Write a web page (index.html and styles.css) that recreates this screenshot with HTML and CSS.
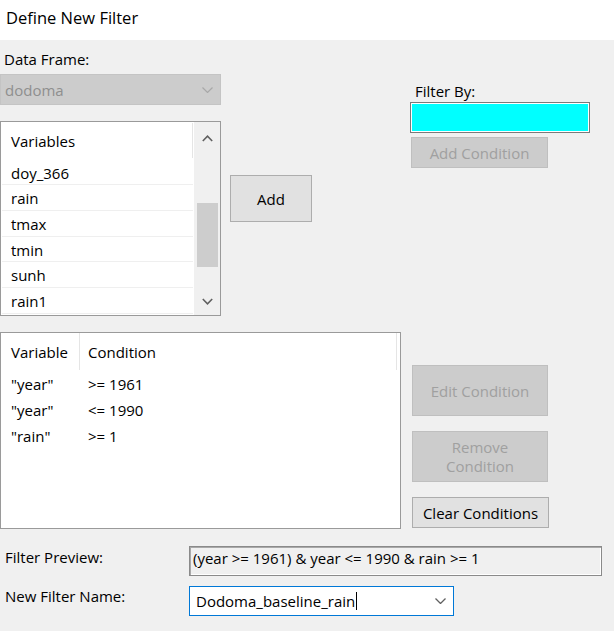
FILE: index.html
```html
<!DOCTYPE html>
<html>
<head>
<meta charset="utf-8">
<title>Define New Filter</title>
<link rel="stylesheet" href="styles.css">
</head>
<body>
<div class="window">
  <div class="titlebar">Define New Filter</div>
  <div class="content">
    <div class="top">
      <div class="left-col">
        <div class="label df-label">Data Frame:</div>
        <div class="combo">
          <span class="combo-text">dodoma</span>
          <svg class="chev" width="11" height="6" viewBox="0 0 11 6"><polyline points="0.5,0.5 5.5,5.5 10.5,0.5" fill="none" stroke="#a8a8a8" stroke-width="1.2"/></svg>
        </div>
        <div class="listbox">
          <div class="lb-items">
            <div class="lb-header"><span class="lb-col">Variables</span></div>
            <div class="lb-row">doy_366</div>
            <div class="lb-row">rain</div>
            <div class="lb-row">tmax</div>
            <div class="lb-row">tmin</div>
            <div class="lb-row">sunh</div>
            <div class="lb-row">rain1</div>
          </div>
          <div class="vscroll">
            <div class="sb-btn sb-up"><svg width="11" height="7" viewBox="0 0 11 7"><polyline points="0.8,6 5.5,1.2 10.2,6" fill="none" stroke="#606060" stroke-width="1.6"/></svg></div>
            <div class="sb-track"><div class="sb-thumb"></div></div>
            <div class="sb-btn sb-down"><svg width="11" height="7" viewBox="0 0 11 7"><polyline points="0.8,1 5.5,5.8 10.2,1" fill="none" stroke="#606060" stroke-width="1.6"/></svg></div>
          </div>
        </div>
      </div>
      <button class="btn add-btn">Add</button>
      <div class="right-col">
        <div class="label fb-label">Filter By:</div>
        <div class="cyan-input"></div>
        <button class="btn disabled addcond-btn">Add Condition</button>
      </div>
    </div>

    <div class="middle">
      <div class="conditions">
        <div class="cond-header">
          <div class="c1">Variable</div>
          <div class="c2">Condition</div>
        </div>
        <div class="cond-row"><div class="c1">"year"</div><div class="c2">&gt;= 1961</div></div>
        <div class="cond-row"><div class="c1">"year"</div><div class="c2">&lt;= 1990</div></div>
        <div class="cond-row"><div class="c1">"rain"</div><div class="c2">&gt;= 1</div></div>
      </div>
      <div class="cond-buttons">
        <button class="btn disabled tall">Edit Condition</button>
        <button class="btn disabled tall two-line">Remove<br>Condition</button>
        <button class="btn clear-btn">Clear Conditions</button>
      </div>
    </div>

    <div class="form-row preview-row">
      <div class="flabel">Filter Preview:</div>
      <div class="preview">(year &gt;= 1961) &amp; year &lt;= 1990 &amp; rain &gt;= 1</div>
    </div>
    <div class="form-row name-row">
      <div class="flabel">New Filter Name:</div>
      <div class="name-input">
        <span class="name-text">Dodoma_baseline_rain</span><span class="caret"></span>
        <svg class="name-chev" width="11" height="6" viewBox="0 0 11 6"><polyline points="0.5,0.5 5.5,5.5 10.5,0.5" fill="none" stroke="#606060" stroke-width="1.3"/></svg>
      </div>
    </div>
  </div>
</div>
</body>
</html>
```

FILE: styles.css
```css
html, body {
  margin: 0;
  padding: 0;
}
body {
  font-family: "Open Sans", "Noto Sans", sans-serif;
  font-size: 15px;
  color: #000;
  background: #f0f0f0;
}
.window {
  width: 614px;
  height: 631px;
  overflow: hidden;
}
.titlebar {
  height: 40px;
  box-sizing: border-box;
  background: #fff;
  padding: 7px 0 0 6px;
  font-size: 16.5px;
  line-height: 22px;
}
.content {
  background: #f0f0f0;
  height: 591px;
}

/* ---------- top section ---------- */
.top {
  display: flex;
  height: 276px;
}
.left-col {
  width: 221px;
  display: flex;
  flex-direction: column;
}
.label {
  line-height: 18px;
}
.df-label {
  margin: 10px 0 0 4px;
}
.combo {
  margin-top: 6px;
  height: 31px;
  box-sizing: border-box;
  background: #cccccc;
  border: 1px solid #c4c4c4;
  display: flex;
  align-items: center;
  justify-content: space-between;
  padding: 0 7px 0 4px;
  color: #8f8f8f;
  line-height: 18px;
}
.chev {
  display: block;
}
.listbox {
  margin-top: 16px;
  height: 195px;
  box-sizing: border-box;
  border: 1px solid #9a9a9a;
  background: #fff;
  display: flex;
}
.lb-items {
  width: 193px;
}
.lb-header {
  height: 37.75px;
  box-sizing: border-box;
  padding-top: 1px;
  line-height: 36px;
}
.lb-col {
  display: block;
  width: 181px;
  padding-left: 10px;
  border-right: 1px solid #e5e5e5;
  height: 35px;
}
.lb-row {
  height: 25.65px;
  box-sizing: border-box;
  margin: 0 1px;
  padding: 2px 0 0 9px;
  line-height: 23px;
  border-bottom: 1px solid #efefef;
}
.vscroll {
  width: 26px;
  background: #f0f0f0;
  display: flex;
  flex-direction: column;
  align-items: center;
}
.sb-btn {
  display: flex;
  align-items: center;
  justify-content: center;
  width: 26px;
}
.sb-btn svg {
  display: block;
}
.sb-up {
  height: 32px;
}
.sb-down {
  height: 28px;
}
.sb-track {
  flex: 1;
  width: 26px;
  display: flex;
  flex-direction: column;
  align-items: center;
}
.sb-thumb {
  margin-top: 49px;
  width: 21px;
  height: 64px;
  background: #cdcdcd;
}

/* ---------- buttons ---------- */
.btn {
  font-family: "Open Sans", "Noto Sans", sans-serif;
  font-size: 15px;
  color: #000;
  background: #e1e1e1;
  border: 1px solid #adadad;
  padding: 0;
  margin: 0;
  box-sizing: border-box;
  line-height: 18px;
  text-align: center;
}
.btn.disabled {
  background: #cccccc;
  border-color: #bfbfbf;
  color: #a0a0a0;
}
.add-btn {
  margin: 135px 0 0 9px;
  width: 82px;
  height: 47px;
}
.right-col {
  margin-left: 98px;
  width: 180px;
  display: flex;
  flex-direction: column;
  align-items: flex-start;
}
.fb-label {
  margin: 42px 0 0 5px;
}
.cyan-input {
  margin-top: 2px;
  width: 180px;
  height: 31px;
  box-sizing: border-box;
  border: 1px solid #7a7a7a;
  box-shadow: inset 0 0 0 1px #ffffff;
  background: #00ffff;
}
.addcond-btn {
  margin: 4px 0 0 1px;
  width: 137px;
  height: 31px;
}

/* ---------- middle section ---------- */
.middle {
  display: flex;
  margin-top: 16px;
}
.conditions {
  width: 401px;
  height: 197px;
  box-sizing: border-box;
  border: 1px solid #9a9a9a;
  background: #fff;
}
.cond-header {
  display: flex;
  height: 37px;
}
.cond-header .c1,
.cond-header .c2 {
  box-sizing: border-box;
  height: 37px;
  padding-top: 1px;
  line-height: 36px;
  border-right: 1px solid #e5e5e5;
}
.c1 {
  width: 79px;
  box-sizing: border-box;
  padding-left: 10px;
}
.c2 {
  padding-left: 8px;
}
.cond-header .c2 {
  width: 317px;
}
.cond-row {
  display: flex;
  height: 26px;
  box-sizing: border-box;
  padding-top: 1px;
  line-height: 26px;
}
.cond-buttons {
  margin-left: 11px;
  padding-top: 33px;
  display: flex;
  flex-direction: column;
  align-items: flex-start;
  gap: 15px;
}
.tall {
  width: 136px;
  height: 51px;
}
.two-line {
  line-height: 19px;
}
.clear-btn {
  width: 137px;
  height: 31px;
}

/* ---------- bottom form ---------- */
.form-row {
  display: flex;
  align-items: flex-start;
}
.preview-row {
  margin-top: 17px;
}
.name-row {
  margin-top: 10px;
}
.flabel {
  width: 189px;
  box-sizing: border-box;
  padding-left: 5px;
  line-height: 18px;
}
.preview-row .flabel {
  padding-top: 2px;
}
.name-row .flabel {
  padding-top: 1px;
}
.preview {
  width: 413px;
  height: 30px;
  box-sizing: border-box;
  border: 1px solid #8a8a8a;
  box-shadow: inset 1px 1px 0 #a9a9a9, inset -1px -1px 0 #ffffff;
  background: #f0f0f0;
  padding: 1px 0 0 3px;
  line-height: 20px;
  white-space: nowrap;
}
.name-input {
  width: 265px;
  height: 30px;
  box-sizing: border-box;
  border: 1px solid #0078d7;
  background: #fff;
  display: flex;
  align-items: center;
  padding: 0 7px 0 6px;
  line-height: 28px;
}
.caret {
  display: block;
  width: 1px;
  height: 18px;
  background: #000;
  margin-left: 1px;
}
.name-chev {
  display: block;
  margin-left: auto;
}
```
